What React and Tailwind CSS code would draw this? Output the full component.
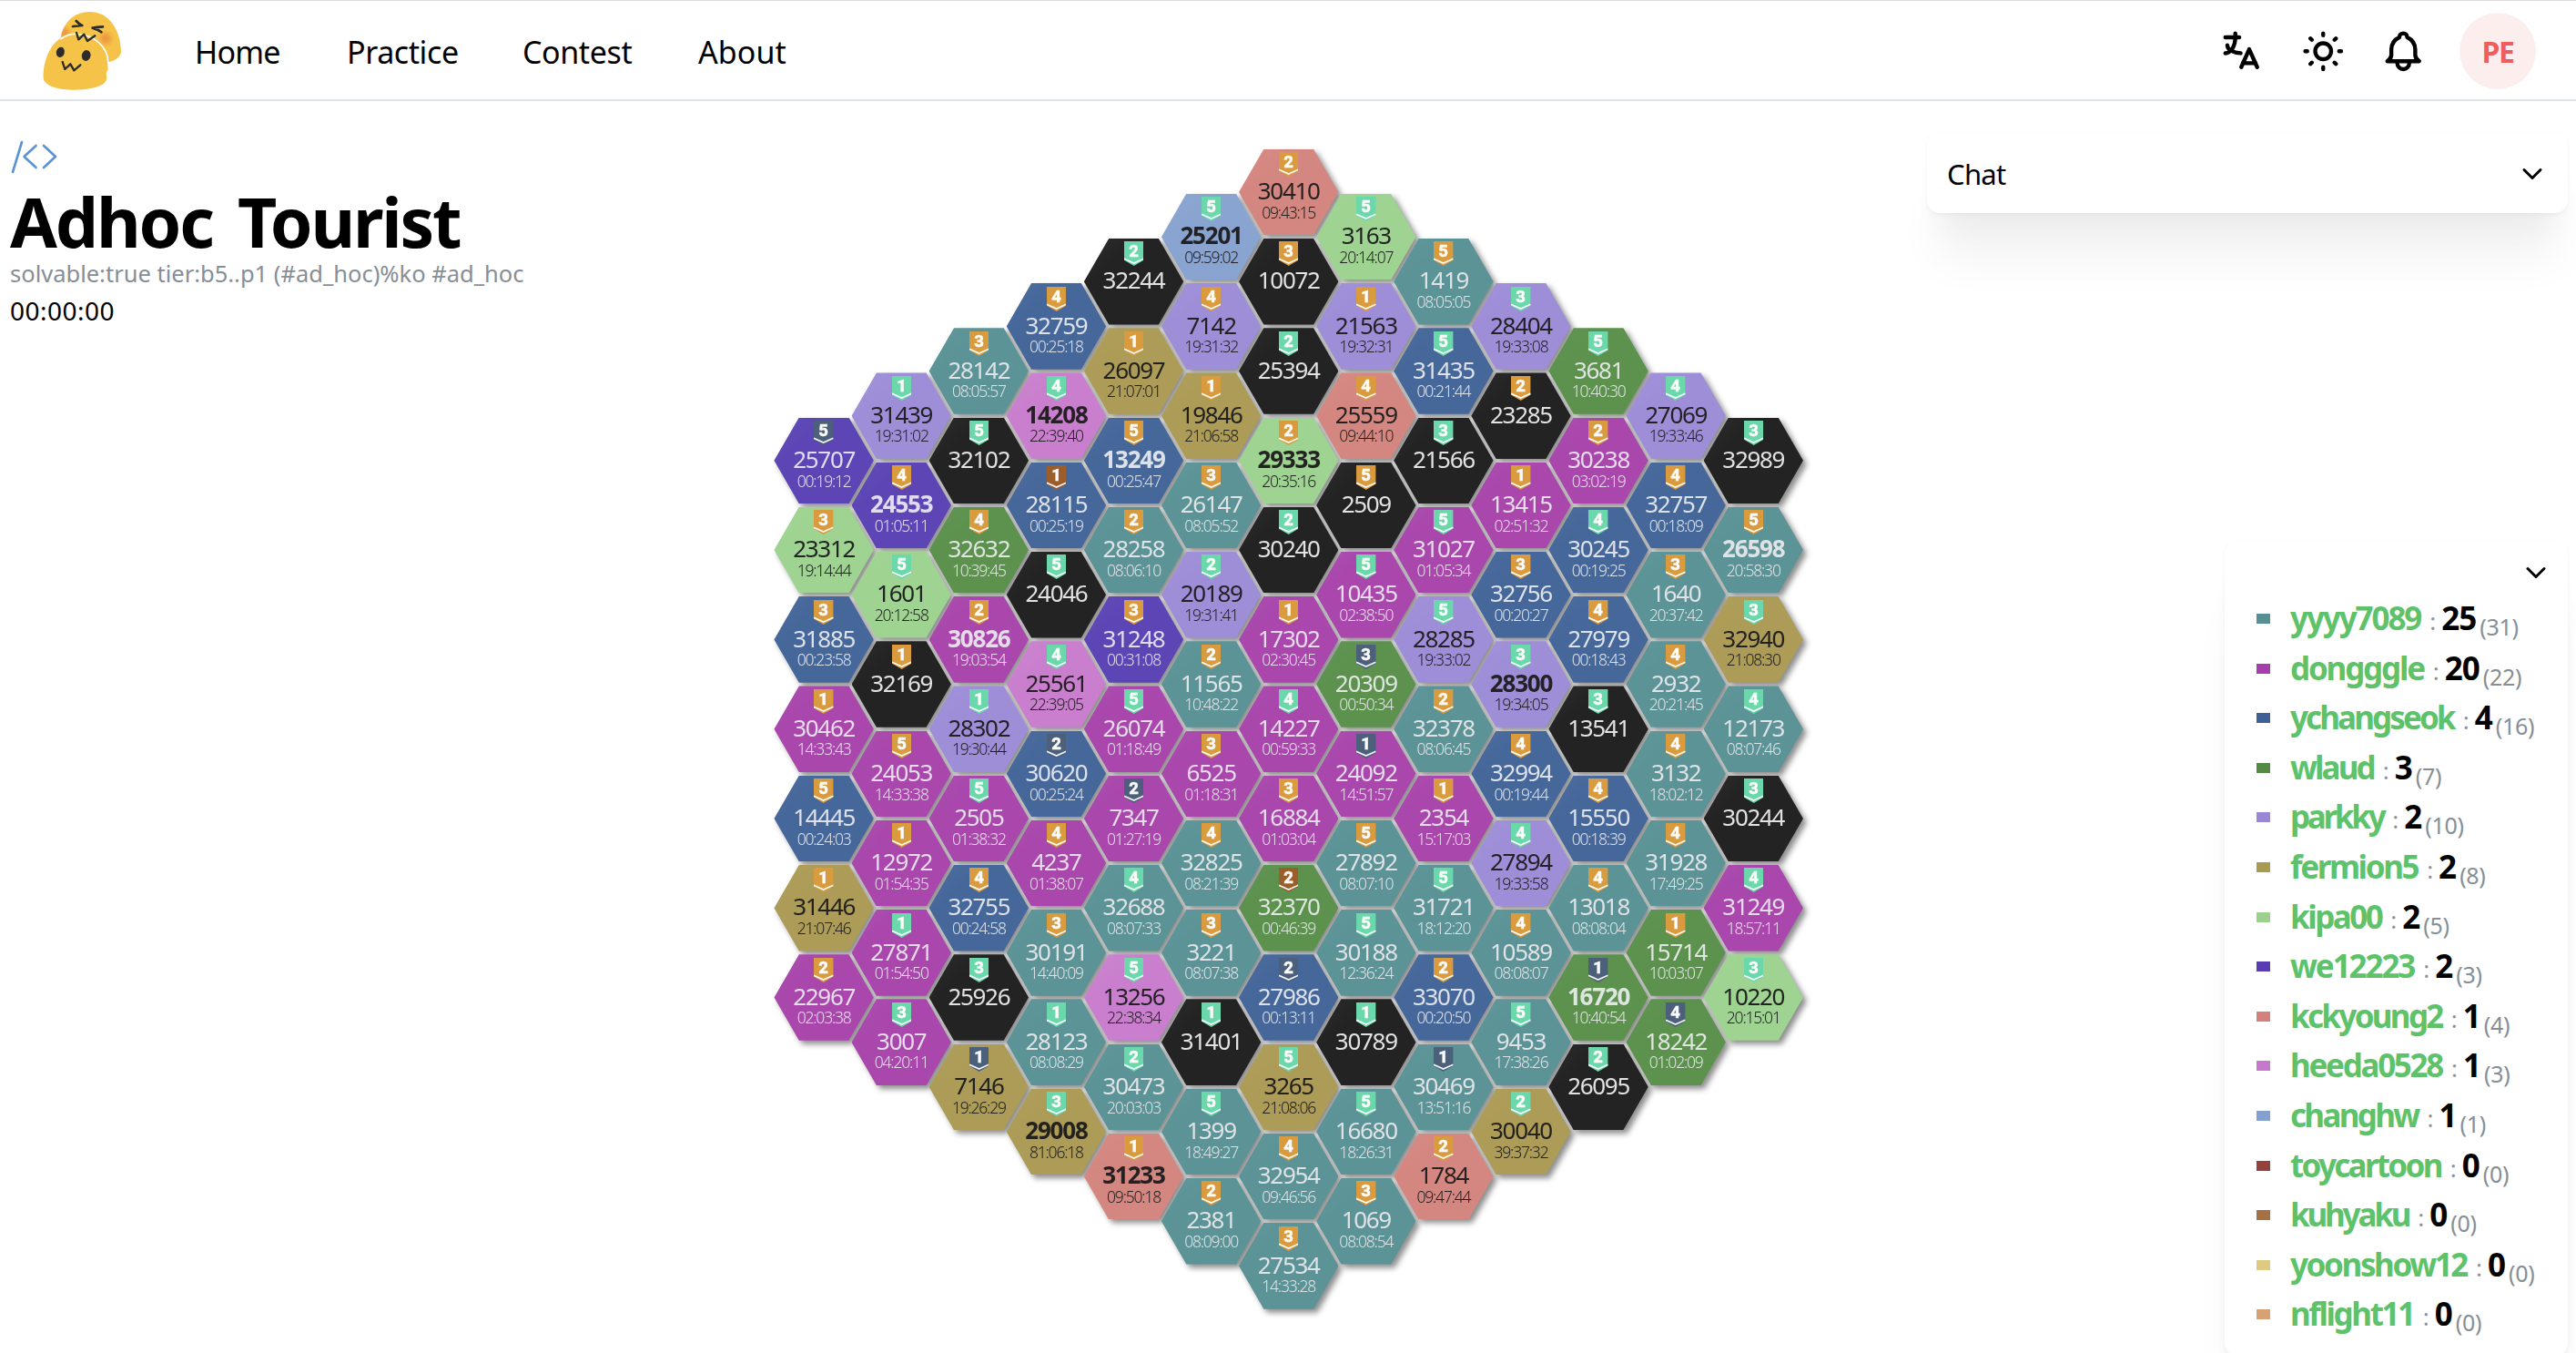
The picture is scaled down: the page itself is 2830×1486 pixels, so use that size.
import React from "react";
import { TbLanguage, TbSun, TbBell, TbChevronDown } from "react-icons/tb";

const COLORS = {
  T: "bg-[#5b9396] text-[#dfe3e6]",
  M: "bg-[#a947ac] text-[#e6dcea]",
  B: "bg-[#46679a] text-[#dde2ea]",
  G: "bg-[#5c914e] text-[#dfe6df]",
  L: "bg-[#9e8ed8] text-[#222226]",
  O: "bg-[#ac9c57] text-[#22211e]",
  K: "bg-[#9ed391] text-[#212420]",
  I: "bg-[#5d45b5] text-[#e0ddee]",
  S: "bg-[#d48780] text-[#262120]",
  P: "bg-[#c97fcd] text-[#262026]",
  C: "bg-[#89a4d0] text-[#202226]",
  X: "bg-[#232323] text-[#e2e2e2]",
};

const BADGES = { g: "#d99b3d", p: "#6ad8ab", s: "#4c607b", b: "#9b5d2a" };

/* color | tier | problem (trailing * = own solve) | time */
const COLUMNS = [
  ["I s5 25707 00:19:12", "K g3 23312 19:14:44", "B g3 31885 00:23:58", "M g1 30462 14:33:43", "B g5 14445 00:24:03", "O g1 31446 21:07:46", "M g2 22967 02:03:38"],
  ["L p1 31439 19:31:02", "I g4 24553* 01:05:11", "K p5 1601 20:12:58", "X g1 32169", "M g5 24053 14:33:38", "M g1 12972 01:54:35", "M p1 27871 01:54:50", "M p3 3007 04:20:11"],
  ["T g3 28142 08:05:57", "X p5 32102", "G g4 32632 10:39:45", "M g2 30826* 19:03:54", "L p1 28302 19:30:44", "M p5 2505 01:38:32", "B g4 32755 00:24:58", "X p3 25926", "O s1 7146 19:26:29"],
  ["B g4 32759 00:25:18", "P p4 14208* 22:39:40", "B b1 28115 00:25:19", "X p5 24046", "P p4 25561 22:39:05", "B s2 30620 00:25:24", "M g4 4237 01:38:07", "T g3 30191 14:40:09", "T p1 28123 08:08:29", "O p3 29008* 81:06:18"],
  ["X p2 32244", "O g1 26097 21:07:01", "B g5 13249* 00:25:47", "T g2 28258 08:06:10", "I g3 31248 00:31:08", "M p5 26074 01:18:49", "M s2 7347 01:27:19", "T p4 32688 08:07:33", "P p5 13256 22:38:34", "T p2 30473 20:03:03", "S g1 31233* 09:50:18"],
  ["C p5 25201* 09:59:02", "L g4 7142 19:31:32", "O g1 19846 21:06:58", "T g3 26147 08:05:52", "L p2 20189 19:31:41", "T g2 11565 10:48:22", "M g3 6525 01:18:31", "T g4 32825 08:21:39", "T g3 3221 08:07:38", "X p1 31401", "T p5 1399 18:49:27", "T g2 2381 08:09:00"],
  ["S g2 30410 09:43:15", "X g3 10072", "X p2 25394", "K g2 29333* 20:35:16", "X p2 30240", "M g1 17302 02:30:45", "M p4 14227 00:59:33", "M g3 16884 01:03:04", "G b2 32370 00:46:39", "B s2 27986 00:13:11", "O p5 3265 21:08:06", "T g4 32954 09:46:56", "T g3 27534 14:33:28"],
  ["K p5 3163 20:14:07", "L g1 21563 19:32:31", "S g4 25559 09:44:10", "X g5 2509", "M p5 10435 02:38:50", "G s3 20309 00:50:34", "M s1 24092 14:51:57", "T g5 27892 08:07:10", "T p5 30188 12:36:24", "X p1 30789", "T p5 16680 18:26:31", "T g3 1069 08:08:54"],
  ["T g5 1419 08:05:05", "B p5 31435 00:21:44", "X p3 21566", "M p5 31027 01:05:34", "L p5 28285 19:33:02", "T g2 32378 08:06:45", "M g1 2354 15:17:03", "T p5 31721 18:12:20", "B g2 33070 00:20:50", "T s1 30469 13:51:16", "S g2 1784 09:47:44"],
  ["L p3 28404 19:33:08", "X g2 23285", "M g1 13415 02:51:32", "B g3 32756 00:20:27", "L p3 28300* 19:34:05", "B g4 32994 00:19:44", "L p4 27894 19:33:58", "T g4 10589 08:08:07", "T p5 9453 17:38:26", "O p2 30040 39:37:32"],
  ["G p5 3681 10:40:30", "M g2 30238 03:02:19", "B p4 30245 00:19:25", "B g4 27979 00:18:43", "X p3 13541", "B g4 15550 00:18:39", "T g4 13018 08:08:04", "G s1 16720* 10:40:54", "X p2 26095"],
  ["L p4 27069 19:33:46", "B g4 32757 00:18:09", "T g3 1640 20:37:42", "T g4 2932 20:21:45", "T g4 3132 18:02:12", "T g4 31928 17:49:25", "G g1 15714 10:03:07", "G s4 18242 01:02:09"],
  ["X p3 32989", "T g5 26598* 20:58:30", "O p3 32940 21:08:30", "T p4 12173 08:07:46", "X p3 30244", "M p4 31249 18:57:11", "K p3 10220 20:15:01"],
];

const RANKING = [
  ["yyyy7089", 25, 31, "bg-[#579093]", "tracking-[-2.1px]"],
  ["dongggle", 20, 22, "bg-[#a63fab]", "tracking-[-2.2px]"],
  ["ychangseok", 4, 16, "bg-[#3f6096]", "tracking-[-2.9px]"],
  ["wlaud", 3, 7, "bg-[#558a44]", "tracking-[-2.9px]"],
  ["parkky", 2, 10, "bg-[#9a88d6]", "tracking-[-3.3px]"],
  ["fermion5", 2, 8, "bg-[#aa9950]", "tracking-[-2.4px]"],
  ["kipa00", 2, 5, "bg-[#9bd18c]", "tracking-[-2.5px]"],
  ["we12223", 2, 3, "bg-[#5a3db3]", "tracking-[-2.1px]"],
  ["kckyoung2", 1, 4, "bg-[#d5817b]", "tracking-[-2.7px]"],
  ["heeda0528", 1, 3, "bg-[#c778cc]", "tracking-[-2.3px]"],
  ["changhw", 1, 1, "bg-[#83a0d0]", "tracking-[-2.7px]"],
  ["toycartoon", 0, 0, "bg-[#94403c]", "tracking-[-2.7px]"],
  ["kuhyaku", 0, 0, "bg-[#a57043]", "tracking-[-3.2px]"],
  ["yoonshow12", 0, 0, "bg-[#ddcb84]", "tracking-[-2.4px]"],
  ["nflight11", 0, 0, "bg-[#d6a273]", "tracking-[-2.4px]"],
];

const NAV = [
  ["Home", "w-[167px] tracking-[-0.8px]"],
  ["Practice", "w-[193px] tracking-[-0.4px]"],
  ["Contest", "w-[193px] tracking-[-0.4px]"],
  ["About", "tracking-[0.1px]"],
];

function Logo() {
  return (
    <svg className="h-[104px] w-[110px]" viewBox="0 0 330 312" fill="none">
      <defs>
        <radialGradient id="blush">
          <stop offset="0" stopColor="#ee9440" />
          <stop offset="0.4" stopColor="#ee9a42" stopOpacity="0.8" />
          <stop offset="1" stopColor="#f2a944" stopOpacity="0" />
        </radialGradient>
        <clipPath id="back">
          <path d="M92 110C100 60 135 24 188 24C250 24 288 80 291 155C290 172 272 184 252 189L200 180L120 130Z" />
        </clipPath>
      </defs>
      <path d="M92 110C100 60 135 24 188 24C250 24 288 80 291 155C290 172 272 184 252 189L200 180L120 130Z" fill="#f4c348" />
      <g clipPath="url(#back)">
        <circle cx="104" cy="92" r="26" fill="url(#blush)" />
        <circle cx="240" cy="112" r="30" fill="url(#blush)" />
      </g>
      <path d="M35 242C33 185 62 97 140 97C206 97 248 145 248 215C236 228 248 238 242 250C234 270 190 281 138 281C84 281 38 268 35 242Z" fill="#f4c348" />
      <path d="M92 114C106 103 122 97 140 97C206 97 248 145 248 188" stroke="#fff" strokeWidth="5" />
      <g stroke="#2c2c2a" strokeWidth="7" strokeLinecap="round" strokeLinejoin="round">
        <path d="M143 54C150 62 156 66 163 69C152 70 142 71 132 72" strokeWidth="8" />
        <path d="M231 73C218 74 208 75 197 77C208 80 218 84 226 91" strokeWidth="8" />
        <path d="M144 93L151 115L169 98L180 120L205 103" />
        <path d="M98 189L106 213L124 196L136 217L157 199" />
      </g>
      <ellipse cx="91" cy="157" rx="13.5" ry="17" transform="rotate(15 91 157)" fill="#2c2c2a" />
      <ellipse cx="176" cy="168" rx="14.5" ry="18" transform="rotate(12 176 168)" fill="#2c2c2a" />
    </svg>
  );
}

function Header() {
  return (
    <header className="flex h-[111px] items-center border-t border-b-2 border-t-[#dcdcdc] border-b-[#dee3e7] pt-0.5 pl-9">
      <div className="flex h-[102px] w-[178px]">
        <Logo />
      </div>
      <nav className="mt-0.5 flex text-[34px] leading-[48px] text-black">
        {NAV.map(([label, cls]) => (
          <a key={label} className={cls}>{label}</a>
        ))}
      </nav>
      <div className="ml-auto flex items-center pr-11 text-black">
        <TbLanguage className="mr-[38px] size-[52.5px]" />
        <TbSun className="mr-[35px] size-[52.5px]" />
        <TbBell className="mr-[36px] size-[52.5px]" />
        <div className="flex size-[84px] items-center justify-center rounded-full bg-[#fdeeee] pt-0.5 text-[32px] font-bold tracking-[-1.5px] text-[#ee5f5b]">PE</div>
      </div>
    </header>
  );
}

function Badge({ tier }) {
  return (
    <svg className="mt-[3.5px] h-[27px] w-[21.4px] shrink-0" viewBox="0 0 21.4 27">
      <path d="M0 0H21.4V20.8L10.7 27L0 20.8Z" fill={BADGES[tier[0]]} />
      <path d="M0 19.2L10.7 24L21.4 19.2" fill="none" stroke="#fff" strokeOpacity="0.93" strokeWidth="1.7" />
      <text x="10.7" y="17.2" textAnchor="middle" fill="#fbfbfa" stroke="#fbfbfa" strokeWidth="0.4" fontFamily="Roboto, sans-serif" fontWeight="800" fontSize="18.5">{tier[1]}</text>
    </svg>
  );
}

function Hex({ cell }) {
  const [color, tier, id, time] = cell.split(" ");
  const own = id.endsWith("*");
  return (
    <div className={`flex h-[94.6px] w-[109.4px] shrink-0 flex-col items-center bg-linear-to-br from-white/4 via-transparent via-30% to-transparent [clip-path:polygon(25%_0,75%_0,100%_50%,75%_100%,25%_100%,0_50%)] ${COLORS[color]}`}>
      <Badge tier={tier} />
      <span className={`mt-[3px] text-[26px] leading-[24px] ${own ? "font-bold tracking-[-1.2px]" : "tracking-[-1.3px]"}`}>{id.replace("*", "")}</span>
      {time && <span className="mt-[2.5px] text-[17.5px] leading-[18px] font-[350] tracking-[-1.2px]">{time}</span>}
    </div>
  );
}

function Board() {
  return (
    <div className="flex drop-shadow-[4px_4px_3px_rgba(0,0,0,0.45)]">
      {COLUMNS.map((cells, i) => (
        <div key={i} className="flex w-[85.1px] flex-col items-center justify-center gap-[3.7px]">
          {cells.map((cell) => (
            <Hex key={cell} cell={cell} />
          ))}
        </div>
      ))}
    </div>
  );
}

function Ranking() {
  return (
    <div className="h-[895px] w-[377px] shrink-0 rounded-[14px] bg-white pt-[16.5px] pr-[17px] shadow-[0_2px_5px_rgba(0,0,0,0.05),0_63px_49px_-12px_rgba(0,0,0,0.05),0_30px_30px_-12px_rgba(0,0,0,0.04)]">
      <TbChevronDown className="ml-auto size-9" />
      <ul className="pt-[5.5px] pl-[35px]">
        {RANKING.map(([name, score, total, swatch, tracking]) => (
          <li key={name} className="flex h-[54.6px] items-baseline whitespace-nowrap leading-[54.6px]">
            <i className={`mr-[22px] h-[11px] w-[15px] -translate-y-[7px] ${swatch}`} />
            <b className={`text-[35px] text-[#5dc26a] ${tracking}`}>{name}</b>
            <span className="ml-2.5 text-[26px] text-[#8a929a]">:</span>
            <b className="ml-[6px] text-[35px] tracking-[-1px] text-black">{score}</b>
            <span className="ml-[4px] translate-y-[5.5px] text-[25px] tracking-[-0.3px] text-[#868e96]">({total})</span>
          </li>
        ))}
      </ul>
    </div>
  );
}

export default function App() {
  return (
    <div className="flex h-[1486px] w-[2830px] flex-col overflow-hidden bg-white font-['Noto_Sans','Open_Sans',sans-serif] text-black">
      <Header />
      <main className="flex min-h-0 flex-1 items-start">
        <section className="w-[862.6px] shrink-0 pt-[42px] pl-[11px]">
          <svg className="ml-px h-[38px] w-[52px]" viewBox="0 0 52 38" fill="none" stroke="#5b93d2" strokeWidth="2.6" strokeLinecap="round" strokeLinejoin="round">
            <path d="M12 3L2 36M27.500 7L14.500 19L27.500 31M36 7L49 19L36 31" />
          </svg>
          <h1 className="mt-[2px] text-[75px] leading-[100px] font-bold tracking-[-2.2px] [word-spacing:10px]">Adhoc Tourist</h1>
          <p className="-mt-[12px] text-[25.5px] leading-[38px] text-[#868e96]">solvable:true tier:b5..p1 (#ad_hoc)%ko #ad_hoc</p>
          <p className="mt-0.5 text-[28px] leading-10 tracking-[0.5px]">00:00:00</p>
        </section>
        <section className="shrink-0 pt-[52.700px]">
          <Board />
        </section>
        <aside className="ml-auto flex flex-col items-end pt-[34px] pr-[9px]">
          <div className="flex h-[89px] w-[704px] items-center rounded-[14px] bg-white pt-[3px] pr-[21.5px] pl-[22px] text-[31px] tracking-[-0.7px] shadow-[0_2px_5px_rgba(0,0,0,0.05),0_63px_49px_-12px_rgba(0,0,0,0.05),0_30px_30px_-12px_rgba(0,0,0,0.04)]">
            <span>Chat</span>
            <TbChevronDown className="ml-auto size-9" />
          </div>
          <div className="mt-[360px]">
            <Ranking />
          </div>
        </aside>
      </main>
    </div>
  );
}
